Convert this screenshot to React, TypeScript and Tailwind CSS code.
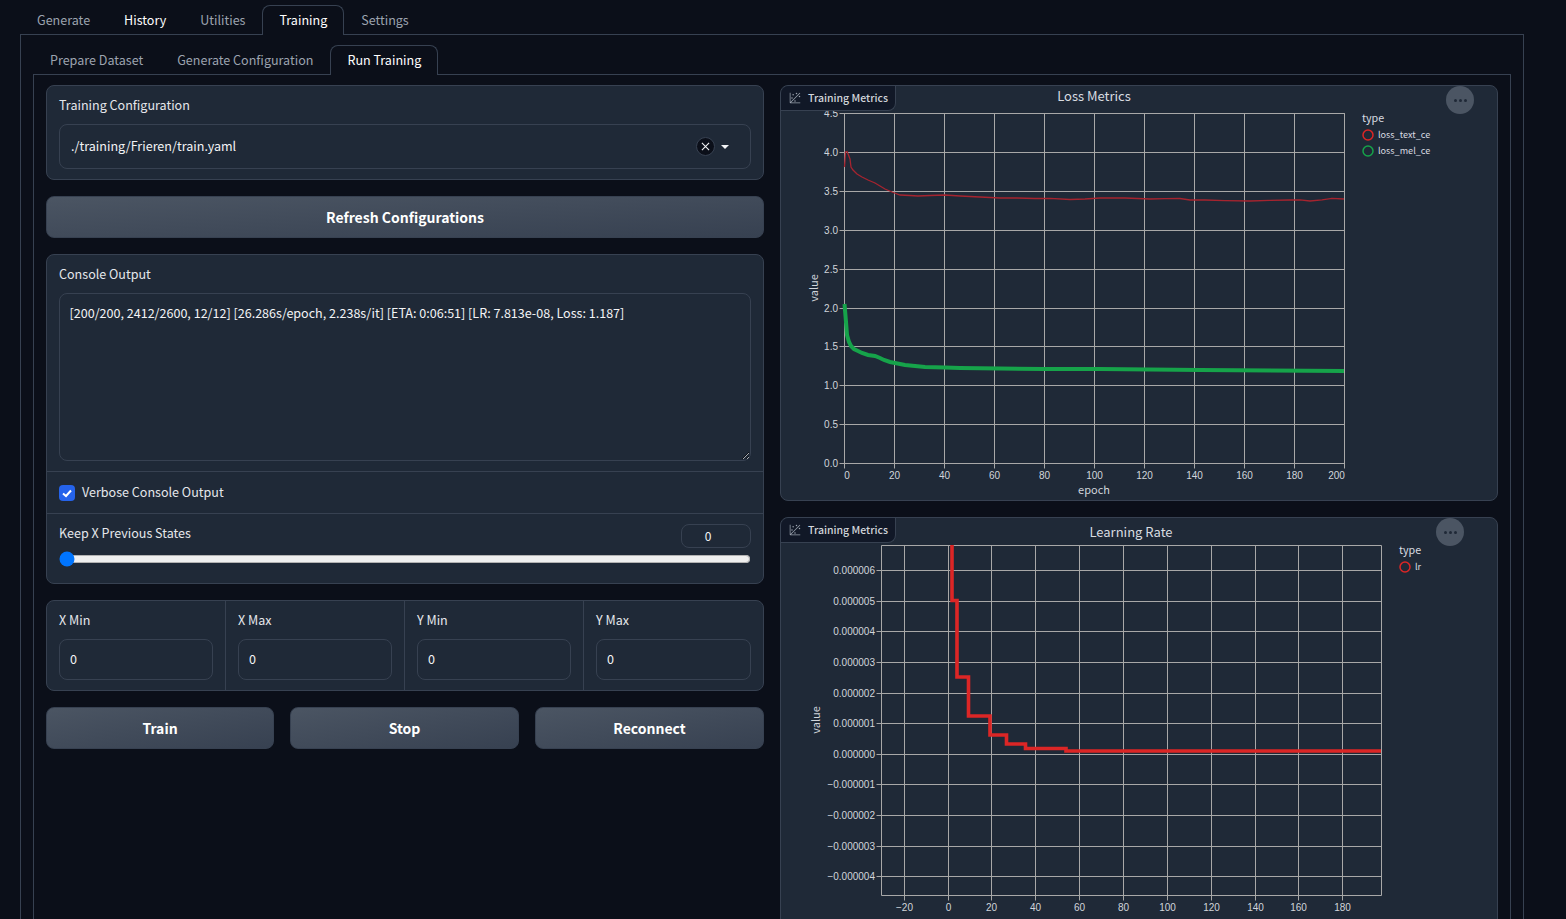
import React from "react"

const lossText =
    "844.5,167 845.5,152 847,151.5 848.5,155 850,159 851,167 853,170 857,174 862,177 868,180 875,183 880,186 885,189 892,192 900,195 910,195.5 918,196 930,195.5 945,195 960,196 980,197 1000,198 1017,198 1035,198.5 1050,198.3 1070,199.5 1085,199 1100,198 1125,198 1150,199 1165,198.6 1180,198.5 1190,200 1205,200 1225,200.6 1250,201 1270,200.4 1290,200 1300,199.8 1310,201 1322,199.8 1332,198.3 1344,199"
const lossMel =
    "844.5,304 845,310 846,322 847,335 849,342 851,346 854,349 858,351 862,353 868,355 875,356 880,358 884,360 890,362 895,363 905,365 915,366 925,367 945,367.5 960,368 1000,368.5 1044,369 1100,369 1200,370 1344,371"
const lrSteps =
    "952,545 952,600.5 957,600.5 957,677 968.5,677 968.5,716 990,716 990,735 1006.5,735 1006.5,744 1025.5,744 1025.5,748.5 1066,748.5 1066,751 1381,751"

const tickText = "#d1d5db"
const gridLine = "#a8a8a8"
const axisFont = "'Liberation Sans', Arial, sans-serif"

function BlockLabel() {
    return (
        <div className="absolute left-0 top-0 z-10 flex h-[25px] w-[115px] items-center gap-[7px] whitespace-nowrap rounded-tl-lg rounded-br-lg border-r border-b border-[#374151] bg-[#111827] pb-[1px] pl-2 text-[10.5px] font-medium leading-4 text-[#d1d5db]">
            <svg viewBox="0 0 32 32" className="h-3 w-3 shrink-0 text-[#9ca3af]" fill="currentColor">
                <circle cx="20" cy="4" r="2" />
                <circle cx="8" cy="16" r="2" />
                <circle cx="28" cy="12" r="2" />
                <circle cx="11" cy="7" r="2" />
                <circle cx="16" cy="24" r="2" />
                <path d="M30 3.413L28.586 2L4 26.585V2H2v26a2 2 0 0 0 2 2h26v-2H5.413Z" />
            </svg>
            Training Metrics
        </div>
    )
}

function Grid({ xs, ys, left, right, top, bottom }: { xs: number[]; ys: number[]; left: number; right: number; top: number; bottom: number }) {
    return (
        <g stroke={gridLine} strokeWidth="1">
            {xs.map((x) => (
                <line key={x} x1={x} x2={x} y1={top} y2={bottom + 5} />
            ))}
            {ys.map((y) => (
                <line key={y} x1={left - 5} x2={right} y1={y} y2={y} />
            ))}
            <line x1={left} x2={left} y1={top} y2={bottom} />
            <line x1={right} x2={right} y1={top} y2={bottom} />
            <line x1={left} x2={right} y1={top} y2={top} />
            <line x1={left} x2={right} y1={bottom} y2={bottom} />
        </g>
    )
}

function LossChart() {
    const xs = Array.from({ length: 11 }, (_, i) => 844.5 + i * 50)
    const ticks = [0, 0.5, 1, 1.5, 2, 2.5, 3, 3.5, 4, 4.5]
    const yOf = (v: number) => Math.round(463 - v * 77.75) + 0.5
    return (
        <svg viewBox="781 86 716 414" className="block h-[414px] w-full">
            <Grid xs={xs} ys={ticks.map(yOf)} left={844.5} right={1344.5} top={113.5} bottom={463.5} />
            <text x="1094" y="101" textAnchor="middle" fontSize="13" fill="#d9dce1">Loss Metrics</text>
            <g fontFamily={axisFont} fontSize="10" fill={tickText}>
                {ticks.map((v) => (
                    <text key={v} x="838" y={yOf(v) + 3.5} textAnchor="end">{v.toFixed(1)}</text>
                ))}
                {xs.map((x, i) => (
                    <text key={x} x={i === 0 ? x + 2.5 : i === 10 ? x - 8 : x} y="479" textAnchor="middle">{i * 20}</text>
                ))}
            </g>
            <text x="1094" y="494" textAnchor="middle" fontSize="11" fill={tickText}>epoch</text>
            <text transform="translate(818 288) rotate(-90)" textAnchor="middle" fontSize="11" fill={tickText}>value</text>
            <polyline points={lossText} fill="none" stroke="#a6242f" strokeWidth="1.3" />
            <polyline points={lossMel} fill="none" stroke="#16a34a" strokeWidth="4" />
            <text x="1362" y="122" fontSize="10.7" fill="#d9dce1">type</text>
            <circle cx="1368" cy="135" r="5" fill="none" stroke="#dc2626" strokeWidth="1.5" />
            <circle cx="1368" cy="151" r="5" fill="none" stroke="#16a34a" strokeWidth="1.5" />
            <text x="1378" y="138" fontSize="9.1" fill="#d9dce1">loss_text_ce</text>
            <text x="1378" y="154" fontSize="9.1" fill="#d9dce1">loss_mel_ce</text>
        </svg>
    )
}

function LrChart() {
    const xs = [904.5, 948.5, 991.5, 1035.5, 1079.5, 1123.5, 1167.5, 1211.5, 1255.5, 1298.5, 1342.5]
    const xLabels = ["\u221220", "0", "20", "40", "60", "80", "100", "120", "140", "160", "180"]
    const ys = [570.5, 601.5, 631.5, 662.5, 693.5, 723.5, 754.5, 784.5, 815.5, 846.5, 876.5]
    const yLabels = [
        "0.000006", "0.000005", "0.000004", "0.000003", "0.000002", "0.000001", "0.000000",
        "\u22120.000001", "\u22120.000002", "\u22120.000003", "\u22120.000004",
    ]
    return (
        <svg viewBox="781 518 716 420" className="block h-[420px] w-full">
            <Grid xs={xs} ys={ys} left={881.5} right={1381.5} top={545.5} bottom={895.5} />
            <text x="1131" y="537" textAnchor="middle" fontSize="13" fill="#d9dce1">Learning Rate</text>
            <g fontFamily={axisFont} fontSize="10" fill={tickText}>
                {ys.map((y, i) => (
                    <text key={y} x="875" y={y + 3.5} textAnchor="end">{yLabels[i]}</text>
                ))}
                {xs.map((x, i) => (
                    <text key={x} x={x} y="911" textAnchor="middle">{xLabels[i]}</text>
                ))}
            </g>
            <text x="1131" y="929" textAnchor="middle" fontSize="11" fill={tickText}>epoch</text>
            <text transform="translate(820 720) rotate(-90)" textAnchor="middle" fontSize="11" fill={tickText}>value</text>
            <polyline points={lrSteps} fill="none" stroke="#dc2626" strokeWidth="3.6" />
            <text x="1399" y="554" fontSize="10.7" fill="#d9dce1">type</text>
            <circle cx="1405" cy="567" r="5" fill="none" stroke="#dc2626" strokeWidth="1.5" />
            <text x="1415" y="570" fontSize="9.1" fill="#d9dce1">lr</text>
        </svg>
    )
}

function MenuDots({ className }: { className: string }) {
    return (
        <div className={`absolute z-10 flex h-7 w-7 items-center justify-center gap-[2px] rounded-full bg-[#4b5563] ${className}`}>
            <span className="h-[3px] w-[3px] rounded-full bg-[#1f2937]" />
            <span className="h-[3px] w-[3px] rounded-full bg-[#1f2937]" />
            <span className="h-[3px] w-[3px] rounded-full bg-[#1f2937]" />
        </div>
    )
}

function NumberField({ label, last }: { label: string; last?: boolean }) {
    return (
        <div className={`px-3 pt-[9px] pb-[10px] ${last ? "" : "border-r border-[#374151]"}`}>
            <div className="mb-[9px] h-5 leading-5 text-[#e5e7eb]">{label}</div>
            <input
                defaultValue="0"
                className="block h-[41px] w-full rounded-lg border border-[#374151] bg-[#1f2937] px-[10px] pb-[2px] text-[#f3f4f6] outline-none"
            />
        </div>
    )
}

function ActionButton({ children }: { children: React.ReactNode }) {
    return (
        <button className="h-[42px] rounded-lg border border-[#374151] bg-gradient-to-br from-[#4b5563] to-[#374151] text-sm font-semibold text-white">
            {children}
        </button>
    )
}

const App = () => {
    return (
        <div className="h-screen overflow-hidden bg-[#0b0f19] pl-5 pr-[42px] pt-[5px] font-['Noto_Sans_CJK_SC','Noto_Sans',sans-serif] text-[12.55px] leading-5 text-[#f3f4f6]">
            {/* main tabs */}
            <div className="relative z-10 flex h-[30px]">
                <div className="flex h-[30px] items-center px-[17px] pb-[1px] text-[#9ca3af]">Generate</div>
                <div className="flex h-[30px] items-center px-[17px] pb-[1px] text-white">History</div>
                <div className="flex h-[30px] items-center px-[17px] pb-[1px] text-[#9ca3af]">Utilities</div>
                <div className="flex h-[30px] items-center rounded-t-lg border border-b-0 border-[#374151] bg-[#0b0f19] px-4 pb-[1px] text-white">Training</div>
                <div className="flex h-[30px] items-center px-[17px] pb-[1px] text-[#9ca3af]">Settings</div>
            </div>
            {/* outer tab body */}
            <div className="-mt-px h-[900px] border border-[#374151] px-3 pt-[10px]">
                {/* sub tabs */}
                <div className="relative z-10 flex h-[30px]">
                    <div className="flex h-[30px] items-center px-[17px] pb-[1px] text-[#9ca3af]">Prepare Dataset</div>
                    <div className="flex h-[30px] items-center px-[17px] pb-[1px] text-[#9ca3af]">Generate Configuration</div>
                    <div className="flex h-[30px] items-center rounded-t-lg border border-b-0 border-[#374151] bg-[#0b0f19] px-4 pb-[1px] text-white">Run Training</div>
                </div>
                <div className="-mt-px h-[860px] border border-[#374151] px-3 pt-[10px]">
                    <div className="grid grid-cols-2 gap-4">
                        {/* left column */}
                        <div className="flex flex-col gap-4">
                            <div className="h-[95px] rounded-lg border border-[#374151] bg-[#1f2937] px-3 pt-[9px]">
                                <div className="mb-[9px] h-5 leading-5 text-[#e5e7eb]">Training Configuration</div>
                                <div className="flex h-[45px] items-center rounded-lg border border-[#374151] pl-[11px] pr-[21px]">
                                    <span className="flex-1 pb-[2px]">./training/Frieren/train.yaml</span>
                                    <span className="flex h-[19px] w-[19px] items-center justify-center rounded-full border border-[#374151] bg-[#0b0f19]">
                                        <svg viewBox="0 0 10 10" className="h-[9px] w-[9px]" stroke="#f3f4f6" strokeWidth="1.2">
                                            <path d="M1 1L9 9M9 1L1 9" />
                                        </svg>
                                    </span>
                                    <span className="ml-[6px] h-0 w-0 border-x-4 border-t-4 border-x-transparent border-t-[#f3f4f6]" />
                                </div>
                            </div>

                            <ActionButton>Refresh Configurations</ActionButton>

                            <div className="h-[330px] rounded-lg border border-[#374151] bg-[#1f2937]">
                                <div className="h-[216px] px-3 pt-[9px]">
                                    <div className="mb-[9px] h-5 leading-5 text-[#e5e7eb]">Console Output</div>
                                    <textarea
                                        readOnly
                                        defaultValue="[200/200, 2412/2600, 12/12] [26.286s/epoch, 2.238s/it] [ETA: 0:06:51] [LR: 7.813e-08, Loss: 1.187]"
                                        className="block h-[168px] w-full resize-y rounded-lg border border-[#374151] bg-[#1f2937] px-[9.5px] py-[9px] leading-5 text-[#f3f4f6] outline-none [color-scheme:dark]"
                                    />
                                </div>
                                <div className="flex h-[43px] items-center gap-[7px] border-y border-[#374151] px-3">
                                    <span className="flex h-4 w-4 items-center justify-center rounded bg-[#2563eb]">
                                        <svg viewBox="0 0 16 16" className="h-4 w-4" fill="none" stroke="#fff" strokeWidth="2">
                                            <path d="M4 8.5L7 11L12 5.5" />
                                        </svg>
                                    </span>
                                    <span className="pb-[2px] text-[#e5e7eb]">Verbose Console Output</span>
                                </div>
                                <div className="px-3 pt-[9px]">
                                    <div className="flex h-[25px] items-start justify-between">
                                        <span className="text-[#e5e7eb]">Keep X Previous States</span>
                                        <span className="mt-[1px] flex h-[24px] w-[70px] items-center justify-center rounded-lg border border-[#374151] pr-[16px] text-xs">0</span>
                                    </div>
                                    <input type="range" min={0} max={10} defaultValue={0} className="mt-[3px] block w-full accent-[#0075ff]" />
                                </div>
                            </div>

                            <div className="grid h-[91px] grid-cols-[179px_179px_179px_1fr] rounded-lg border border-[#374151] bg-[#1f2937]">
                                <NumberField label="X Min" />
                                <NumberField label="X Max" />
                                <NumberField label="Y Min" />
                                <NumberField label="Y Max" last />
                            </div>

                            <div className="grid grid-cols-[228px_229px_229px] gap-4">
                                <ActionButton>Train</ActionButton>
                                <ActionButton>Stop</ActionButton>
                                <ActionButton>Reconnect</ActionButton>
                            </div>
                        </div>

                        {/* right column */}
                        <div className="flex flex-col gap-4">
                            <div className="relative h-[416px] rounded-lg border border-[#374151] bg-[#1f2937]">
                                <BlockLabel />
                                <MenuDots className="right-[23px] top-0" />
                                <LossChart />
                            </div>
                            <div className="relative h-[422px] rounded-lg border border-[#374151] bg-[#1f2937]">
                                <BlockLabel />
                                <MenuDots className="right-[33px] top-0" />
                                <LrChart />
                            </div>
                        </div>
                    </div>
                </div>
            </div>
        </div>
    )
}

export default App
